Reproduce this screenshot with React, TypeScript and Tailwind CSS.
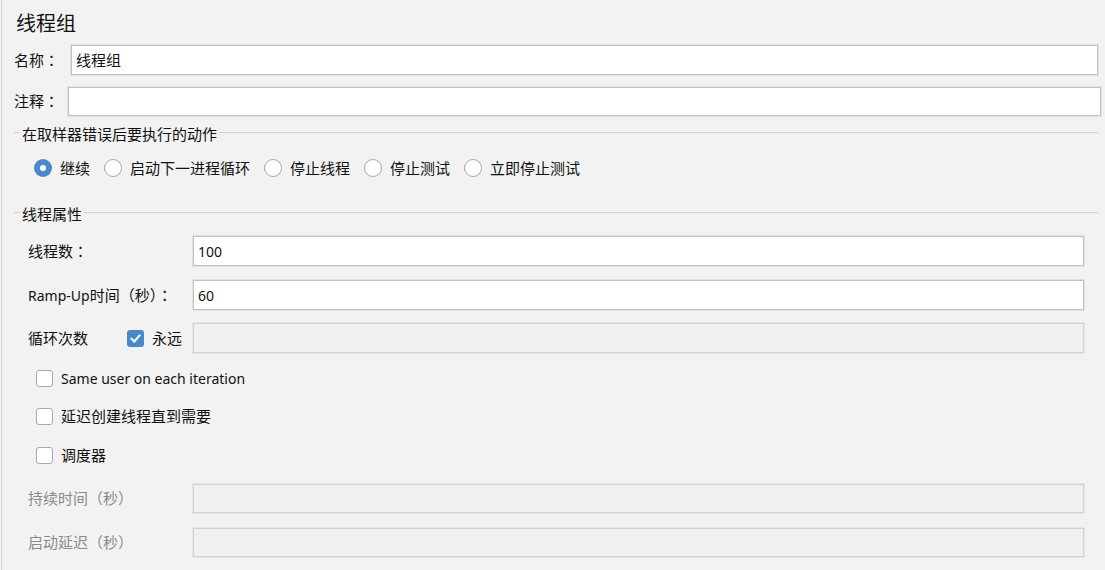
import React from "react";

const FONT = { fontFamily: "'Noto Sans','Noto Sans CJK SC',sans-serif" };
const TC = { fontFamily: "'Noto Sans CJK TC',sans-serif" };

function Colon() {
  return <span style={TC}>：</span>;
}

function Radio({ checked }: { checked?: boolean }) {
  if (checked) {
    return (
      <span className="w-[18px] h-[18px] rounded-full bg-[#4a88cc] flex items-center justify-center shrink-0">
        <span className="w-[6px] h-[6px] rounded-full bg-white" />
      </span>
    );
  }
  return <span className="w-[18px] h-[18px] rounded-full bg-white border-[1.5px] border-[#a8a8a8] shrink-0" />;
}

function Check({ checked }: { checked?: boolean }) {
  if (checked) {
    return (
      <span className="w-[17px] h-[17px] rounded-[3px] bg-[#4a88cc] flex items-center justify-center shrink-0">
        <svg width="13" height="13" viewBox="0 0 13 13">
          <path d="M2.5 6.8 L5.3 9.5 L10.6 3.3" stroke="white" strokeWidth="2" fill="none" strokeLinecap="square" />
        </svg>
      </span>
    );
  }
  return <span className="w-[17px] h-[17px] rounded-[3px] bg-white border-[1.5px] border-[#a8a8a8] shrink-0" />;
}

function Input({ value, disabled, className }: { value?: string; disabled?: boolean; className?: string }) {
  return (
    <div
      className={
        (disabled
          ? "bg-[#f0f0f0] border border-[#d2d2d2] shadow-[0_0_0_1px_#e6e6e6] "
          : "bg-white border border-[#c2c2c2] shadow-[0_0_0_1px_#e2e2e2] ") +
        "flex items-center pl-[4px] text-[14px] text-[#111] shrink-0 " +
        (className ?? "")
      }
    >
      {value}
    </div>
  );
}

function Header({ title }: { title: string }) {
  return (
    <div className="flex h-[20px] items-start">
      <div className="w-[6px] ml-[12px] mt-[10px] border-t border-[#d3d3d3]" />
      <div className="px-[2px] leading-[24px] text-[15px] text-[#111] whitespace-nowrap">{title}</div>
      <div className="flex-1 mr-[7px] mt-[10px] border-t border-[#d3d3d3]" />
    </div>
  );
}

export default function App() {
  const radios = ["继续", "启动下一进程循环", "停止线程", "停止测试", "立即停止测试"];
  return (
    <div className="w-[1105px] h-[570px] bg-[#f2f2f2] overflow-hidden" style={FONT}>
      <div className="ml-[1px] h-full border-l border-[#d6d6d6] flex flex-col">
        <div className="mt-[9px] h-[30px] leading-[30px] text-[20px] text-[#111] pl-[14px]">线程组</div>

        <div className="mt-[6px] h-[30px] flex items-center">
          <div className="w-[69px] shrink-0 whitespace-nowrap pl-[12px] text-[15px] text-[#111]">
            名称<Colon />
          </div>
          <Input value="线程组" className="h-[30px] w-[1027px] text-[15px]" />
        </div>

        <div className="mt-[12px] h-[29px] flex items-center">
          <div className="w-[66px] shrink-0 whitespace-nowrap pl-[12px] text-[15px] text-[#111]">
            注释<Colon />
          </div>
          <Input className="h-[29px] w-[1033px]" />
        </div>

        <div className="mt-[6px]">
          <Header title="在取样器错误后要执行的动作" />
        </div>

        <div className="mt-[17px] h-[18px] flex items-center pl-[32px] text-[15px] text-[#111]">
          {radios.map((r, i) => (
            <div key={r} className="flex items-center mr-[14px]">
              <Radio checked={i === 0} />
              <span className="ml-[8px] leading-[18px] whitespace-nowrap">{r}</span>
            </div>
          ))}
        </div>

        <div className="mt-[25px]">
          <Header title="线程属性" />
        </div>

        <div className="mt-[14px] h-[30px] flex items-center text-[15px] text-[#111]">
          <div className="w-[191px] shrink-0 whitespace-nowrap pl-[26px]">
            线程数<Colon />
          </div>
          <Input value="100" className="h-[30px] w-[891px]" />
        </div>

        <div className="mt-[14px] h-[30px] flex items-center text-[15px] text-[#111]">
          <div className="w-[191px] shrink-0 whitespace-nowrap pl-[26px]">
            <span className="text-[14px]">Ramp-Up</span>时间（秒）<Colon />
          </div>
          <Input value="60" className="h-[30px] w-[891px]" />
        </div>

        <div className="mt-[13px] h-[30px] flex items-center text-[15px] text-[#111]">
          <div className="w-[125px] shrink-0 whitespace-nowrap pl-[26px]">循环次数</div>
          <Check checked />
          <span className="ml-[8px] w-[41px] shrink-0 whitespace-nowrap">永远</span>
          <Input disabled className="h-[30px] w-[891px]" />
        </div>

        <div className="mt-[17px] h-[17px] flex items-center pl-[34px] text-[14px] text-[#111]">
          <Check />
          <span className="ml-[8px]">Same user on each iteration</span>
        </div>

        <div className="mt-[21px] h-[17px] flex items-center pl-[34px] text-[15px] text-[#111]">
          <Check />
          <span className="ml-[8px]">延迟创建线程直到需要</span>
        </div>

        <div className="mt-[22px] h-[17px] flex items-center pl-[34px] text-[15px] text-[#111]">
          <Check />
          <span className="ml-[8px]">调度器</span>
        </div>

        <div className="mt-[20px] h-[29px] flex items-center text-[15px] text-[#8a8a8a]">
          <div className="w-[191px] shrink-0 whitespace-nowrap pl-[26px]">持续时间（秒）</div>
          <Input disabled className="h-[29px] w-[891px]" />
        </div>

        <div className="mt-[15px] h-[29px] flex items-center text-[15px] text-[#8a8a8a]">
          <div className="w-[191px] shrink-0 whitespace-nowrap pl-[26px]">启动延迟（秒）</div>
          <Input disabled className="h-[29px] w-[891px]" />
        </div>
      </div>
    </div>
  );
}
